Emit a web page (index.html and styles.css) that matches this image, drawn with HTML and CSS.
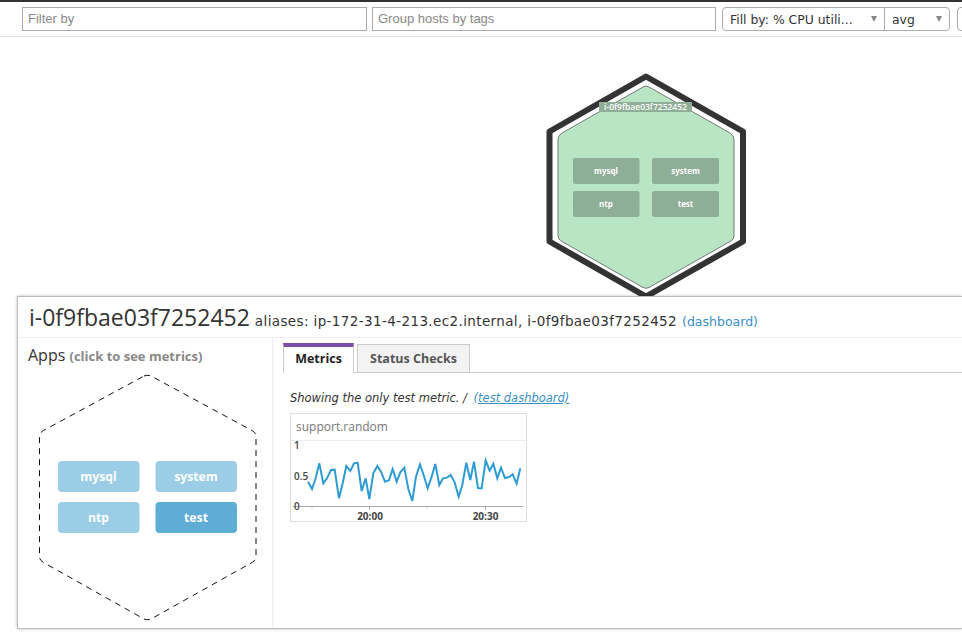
FILE: index.html
```html
<!DOCTYPE html>
<html lang="en">
<head>
    <meta charset="UTF-8">
    <meta name="viewport" content="width=device-width, initial-scale=1.0">
    <title>Host Map</title>
    <link rel="stylesheet" href="styles.css">
</head>
<body>
    <div class="toolbar">
        <input class="field filterField" type="text" placeholder="Filter by">
        <input class="field groupField" type="text" placeholder="Group hosts by tags">
        <div class="selectGroup">
            <div class="selectBox fillBox"><span>Fill by: % CPU utili...</span><i class="caret"></i></div>
            <div class="selectBox avgBox"><span>avg</span><i class="caret"></i></div>
        </div>
        <div class="selectGroup stubBox"></div>
    </div>

    <div class="mapArea">
        <svg class="hostMap" width="240" height="259" viewBox="530 37 240 259">
            <polygon class="hostRing" points="646,76.5 549.5,131.5 549.5,241.5 646,296.5 743,241.5 743,131.5"/>
            <path class="hostFill" d="M643,87 Q646,85 649,87 L730,133 Q734,135.5 734,139 L734,236 Q734,239.5 730,241.5 L649,287.5 Q646,289 643,287.5 L562,241.5 Q558,239.5 558,236 L558,139 Q558,135.5 562,133 Z"/>
            <rect class="hostLabel" x="599" y="102" width="93" height="10"/>
            <text class="hostLabelText" x="645.5" y="110">i-0f9fbae03f7252452</text>
            <rect class="hostTile" x="573" y="158" width="66.5" height="26" rx="2"/>
            <rect class="hostTile" x="652" y="158" width="67" height="26" rx="2"/>
            <rect class="hostTile" x="573" y="191" width="66.5" height="26" rx="2"/>
            <rect class="hostTile" x="652" y="191" width="67" height="26" rx="2"/>
            <text class="hostTileText" x="606" y="174">mysql</text>
            <text class="hostTileText" x="685.5" y="174">system</text>
            <text class="hostTileText" x="606" y="207">ntp</text>
            <text class="hostTileText" x="685.5" y="207">test</text>
        </svg>
    </div>

    <div class="hostPanel">
        <div class="panelHeader">
            <span class="hostName">i-0f9fbae03f7252452</span>
            <span class="hostAliases">aliases: ip-172-31-4-213.ec2.internal, i-0f9fbae03f7252452</span>
            <a class="blueLink" href="#">(dashboard)</a>
        </div>
        <div class="panelBody">
            <div class="appsColumn">
                <h2 class="appsTitle">Apps <small>(click to see metrics)</small></h2>
                <svg class="appsHex" width="254" height="262" viewBox="18 366 254 262">
                    <path class="appsOutline" d="M144,376 Q147.5,374.5 151,376 L252,430.5 Q256,433 256,436 L256,557 Q256,560 252,562.5 L151,619 Q147.5,620.5 144,619 L43.5,562.5 Q39.5,560 39.5,557 L39.5,436 Q39.5,433 43.5,430.5 Z"/>
                    <rect class="appTile" x="58" y="461" width="81.5" height="31" rx="4"/>
                    <rect class="appTile" x="155.5" y="461" width="81.5" height="31" rx="4"/>
                    <rect class="appTile" x="58" y="502" width="81.5" height="31" rx="4"/>
                    <rect class="appTile appTileActive" x="155.5" y="502" width="81.5" height="31" rx="4"/>
                    <text class="appTileText" x="98.5" y="481">mysql</text>
                    <text class="appTileText" x="196" y="481">system</text>
                    <text class="appTileText" x="98.5" y="522">ntp</text>
                    <text class="appTileText" x="196" y="522">test</text>
                </svg>
            </div>
            <div class="metricsColumn">
                <div class="tabs">
                    <div class="tab tabActive">Metrics</div>
                    <div class="tab tabPlain">Status Checks</div>
                </div>
                <p class="showing">Showing the only test metric. / <a class="blueLink" href="#">(test dashboard)</a></p>
                <div class="graphCard">
                    <div class="graphTitle">support.random</div>
                    <svg class="graph" width="235" height="81" viewBox="291 441 235 81">
                        <line class="axis" x1="293" y1="506.5" x2="523" y2="506.5"/>
                        <line class="axis" x1="312" y1="506.5" x2="312" y2="508"/>
                        <line class="axis" x1="369.5" y1="506.5" x2="369.5" y2="510"/>
                        <line class="axis" x1="427" y1="506.5" x2="427" y2="508"/>
                        <line class="axis" x1="485.5" y1="506.5" x2="485.5" y2="510"/>
                        <text class="tickY" x="294" y="449">1</text>
                        <text class="tickY" x="294" y="480">0.5</text>
                        <text class="tickY" x="294" y="510">0</text>
                        <text class="tickX" x="370" y="520">20:00</text>
                        <text class="tickX" x="485.5" y="520">20:30</text>
                        <polyline class="series" transform="translate(280 405) scale(0.3333)" points="84,230 96,252 107,220 118,175 130,235 141,220 153,195 164,194 177,280 188,235 199,183 211,198 222,175 233,173 245,258 257,220 268,282 280,205 292,183 303,200 315,230 327,226 338,192 350,230 361,202 373,188 385,252 397,288 408,215 420,178 431,210 443,250 455,215 466,177 478,240 489,220 501,218 512,210 524,232 536,275 547,240 559,173 571,225 582,170 594,249 605,250 617,166 629,197 640,176 652,220 663,188 675,219 687,216 698,208 710,236 721,190"/>
                    </svg>
                </div>
            </div>
        </div>
    </div>
</body>
</html>
```

FILE: styles.css
```css
html, body {
    height: 100%;
}
body {
    margin: 0;
    overflow: hidden;
    background-color: #fff;
    color: #333;
    font-family: "Open Sans", sans-serif;
}
.toolbar {
    display: flex;
    gap: 5px;
    height: 37px;
    padding: 5px 0 0 22px;
    box-sizing: border-box;
    border-top: 2px solid #333;
    border-bottom: 1px solid #ddd;
}
.field {
    flex-shrink: 0;
    height: 24px;
    padding: 0 5px 2px;
    border: 1px solid #aaa;
    border-radius: 0;
    box-sizing: border-box;
    font-family: "Liberation Sans", sans-serif;
    font-size: 13px;
    outline: none;
}
.field::placeholder {
    color: #888;
}
.filterField {
    width: 345px;
}
.groupField {
    width: 344px;
    margin-right: 1px;
}
.selectGroup {
    display: flex;
    height: 24px;
    box-sizing: border-box;
    border: 1px solid #aaa;
    border-radius: 4px;
    flex-shrink: 0;
}
.selectBox {
    display: flex;
    align-items: center;
    justify-content: space-between;
    padding: 0 7px;
    box-sizing: border-box;
    font-family: "DejaVu Sans", sans-serif;
    font-size: 12.4px;
    color: #333;
}
.fillBox {
    width: 162px;
    border-right: 1px solid #aaa;
}
.avgBox {
    width: 64px;
}
.caret {
    width: 0;
    height: 0;
    border-left: 3.5px solid transparent;
    border-right: 3.5px solid transparent;
    border-top: 6px solid #888;
}
.stubBox {
    width: 30px;
    margin-left: 2px;
}
.mapArea {
    height: 259px;
    padding-left: 530px;
    overflow: hidden;
}
.hostMap {
    display: block;
}
.hostRing {
    fill: #fff;
    stroke: #333;
    stroke-width: 6;
    stroke-linejoin: round;
}
.hostFill {
    fill: #b8e6c5;
    stroke: #777;
    stroke-width: 1;
}
.hostLabel {
    fill: #8fae97;
}
.hostLabelText {
    fill: #fff;
    font-size: 8.5px;
    font-weight: 600;
    text-anchor: middle;
}
.hostTile {
    fill: #8fae97;
}
.hostTileText {
    fill: #fff;
    font-size: 8px;
    font-weight: 700;
    text-anchor: middle;
}
.hostPanel {
    position: relative;
    margin-left: 17px;
    height: 333px;
    box-sizing: border-box;
    background-color: #fff;
    border: 1px solid #bbb;
    border-right: none;
    box-shadow: 0 0 3px rgba(0, 0, 0, 0.25);
}
.panelHeader {
    display: flex;
    align-items: baseline;
    gap: 5px;
    height: 41px;
    padding: 4px 0 0 11px;
    box-sizing: border-box;
    border-bottom: 1px solid #eee;
}
.hostName {
    font-size: 23px;
    color: #333;
}
.hostAliases {
    font-family: "DejaVu Sans", sans-serif;
    font-size: 13.5px;
    letter-spacing: 0.38px;
    color: #333;
}
.blueLink {
    color: #3a8fc5;
    font-family: "DejaVu Sans", sans-serif;
    font-size: 12.5px;
    text-decoration: none;
}
.panelBody {
    display: flex;
    height: 290px;
}
.appsColumn {
    width: 254px;
    border-right: 1px solid #eee;
    flex-shrink: 0;
}
.appsTitle {
    margin: 0;
    height: 28px;
    padding: 5px 0 0 10px;
    box-sizing: border-box;
    font-size: 16px;
    font-weight: 400;
    line-height: 24px;
}
.appsTitle small {
    font-size: 13px;
    font-weight: 700;
    color: #888;
}
.appsHex {
    display: block;
}
.appsOutline {
    fill: #fff;
    stroke: #111;
    stroke-width: 1;
    stroke-dasharray: 6 5;
}
.appTile {
    fill: #9ccde6;
}
.appTileActive {
    fill: #5eadd6;
}
.appTileText {
    fill: #fff;
    font-size: 12.2px;
    font-weight: 700;
    text-anchor: middle;
}
.metricsColumn {
    flex: 1;
    padding: 5px 0 0 10px;
}
.tabs {
    display: flex;
    gap: 3px;
    height: 30px;
    box-sizing: border-box;
    border-bottom: 1px solid #ccc;
}
.tab {
    height: 29px;
    margin-top: 1px;
    box-sizing: border-box;
    border: 1px solid #ccc;
    background-color: #f3f3f3;
    color: #555;
    font-size: 12.5px;
    font-weight: 700;
    line-height: 28px;
    text-align: center;
}
.tabPlain {
    width: 113px;
}
.tabActive {
    width: 71px;
    height: 30px;
    margin-top: 0;
    border-top: 4px solid #7a4ea6;
    border-bottom: none;
    background-color: #fff;
    color: #222;
    line-height: 24px;
}
.showing {
    margin: 16px 0 6px 7px;
    font-family: "DejaVu Sans", sans-serif;
    font-size: 11.5px;
    font-style: italic;
    line-height: 18px;
}
.showing .blueLink {
    margin-left: 3px;
    font-size: 11.5px;
    text-decoration: underline;
}
.graphCard {
    width: 237px;
    height: 109px;
    margin-left: 7px;
    box-sizing: border-box;
    border: 1px solid #ddd;
}
.graphTitle {
    height: 27px;
    padding-left: 5px;
    box-sizing: border-box;
    border-bottom: 1px solid #eee;
    color: #777;
    font-size: 12px;
    line-height: 26px;
}
.graph {
    display: block;
    overflow: visible;
}
.axis {
    stroke: #aaa;
    stroke-width: 1;
}
.tickY {
    fill: #444;
    font-size: 10px;
    font-weight: 600;
}
.tickX {
    fill: #444;
    font-size: 10px;
    font-weight: 700;
    text-anchor: middle;
}
.series {
    fill: none;
    stroke: #2f9bd3;
    stroke-width: 6;
}
```
